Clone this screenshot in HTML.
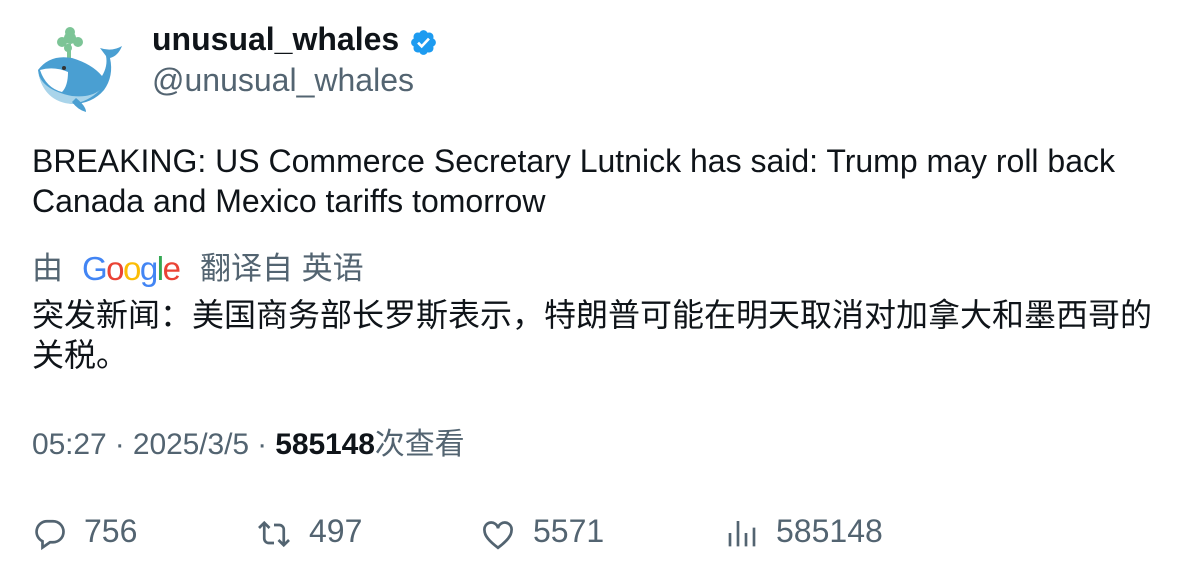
<!DOCTYPE html>
<html><head><meta charset="utf-8"><style>
body{margin:0;width:1196px;height:578px;background:#fff;font-family:"Liberation Sans","Noto Sans CJK SC",sans-serif;color:#0f1419;position:relative;overflow:hidden}
.a{position:absolute;white-space:nowrap}
.g{color:#536471}
</style></head><body>
<svg class="a" style="left:32px;top:26px" width="96" height="86" viewBox="0 0 96 86">
<g fill="#7cc496"><circle cx="38" cy="12" r="6"/><circle cx="30" cy="16" r="5"/><circle cx="46" cy="16" r="5"/><circle cx="38" cy="6" r="5"/><circle cx="36" cy="22" r="4"/><rect x="35" y="18" width="4" height="14"/></g>
<path d="M6 44 Q18 28 40 32 Q60 38 70 50 Q76 40 74 30 L68 22 Q80 26 90 20 Q86 30 78 32 Q82 50 72 64 Q60 78 40 78 Q10 74 6 44Z" fill="#4a9fd2"/>
<path d="M6 46 Q10 64 40 70 Q58 72 68 64 Q56 76 40 78 Q12 76 6 46Z" fill="#a9d4ea"/>
<path d="M8 44 Q22 40 36 46 Q36 60 30 66 Q14 62 8 44Z" fill="#fff"/>
<path d="M44 72 Q54 80 54 86 Q46 84 40 76Z" fill="#4a9fd2"/>
<circle cx="32" cy="42" r="2" fill="#333"/>
</svg>
<div class="a" style="left:152px;top:21px;font-size:32px;font-weight:bold">unusual_whales</div>
<svg class="a" style="left:409px;top:28px" width="29" height="29" viewBox="0 0 24 24"><path fill="#1d9bf0" d="M22.25 12c0-1.43-.88-2.670-2.19-3.340.46-1.390.2-2.900-.81-3.910s-2.520-1.270-3.910-.81c-.66-1.310-1.910-2.190-3.340-2.190s-2.670.88-3.330 2.190c-1.400-.46-2.910-.2-3.920.81s-1.260 2.520-.8 3.910C2.630 9.330 1.750 10.570 1.750 12s.88 2.670 2.190 3.340c-.46 1.390-.2 2.900.8 3.910s2.520 1.260 3.910.81c.67 1.310 1.910 2.190 3.340 2.190s2.680-.88 3.340-2.190c1.390.45 2.900.2 3.910-.81s1.270-2.520.81-3.910c1.310-.67 2.190-1.910 2.190-3.340z"/><path d="M7.5 12.2l3 3 6-6.4" stroke="#fff" stroke-width="2.2" fill="none"/></svg>
<div class="a g" style="left:152px;top:62px;font-size:32px">@unusual_whales</div>
<div class="a" style="left:32px;top:141px;font-size:32px;line-height:40px">BREAKING: US Commerce Secretary Lutnick has said: Trump may roll back<br>Canada and Mexico tariffs tomorrow</div>
<div class="a g" style="left:32px;top:243px;font-size:31px">由</div>
<div class="a" style="left:82px;top:250px;font-size:33px;letter-spacing:-1.5px"><span style="color:#4285f4">G</span><span style="color:#ea4335">o</span><span style="color:#fbbc05">o</span><span style="color:#4285f4">g</span><span style="color:#34a853">l</span><span style="color:#ea4335">e</span></div>
<div class="a g" style="left:200px;top:243px;font-size:31px">翻译自 英语</div>
<div class="a" style="left:32px;top:295px;font-size:32px;line-height:40px">突发新闻：美国商务部长罗斯表示，特朗普可能在明天取消对加拿大和墨西哥的<br>关税。</div>
<div class="a g" style="left:32px;top:419px;font-size:30px;letter-spacing:-0.1px">05:27 · 2025/3/5 · <b style="color:#0f1419">585148</b>次查看</div>
<svg class="a" style="left:32px;top:516px" width="36" height="36" viewBox="0 0 24 24" fill="none" stroke="#536471" stroke-width="1.8"><path d="M10 3.5h4a7 7 0 010 14h-2l-5 3.5v-4.2A7 7 0 0110 3.5z"/></svg>
<div class="a g" style="left:84px;top:513px;font-size:32px">756</div>
<svg class="a" style="left:256px;top:516px" width="36" height="36" viewBox="0 0 24 24" fill="none" stroke="#536471" stroke-width="1.8"><path d="M2 8l3.5-3.5L9 8M5.5 5v10a3 3 0 003 3H12M22 16l-3.5 3.5L15 16M18.5 19V9a3 3 0 00-3-3H12"/></svg>
<div class="a g" style="left:309px;top:513px;font-size:32px">497</div>
<svg class="a" style="left:480px;top:517px" width="36" height="36" viewBox="0 0 24 24" fill="none" stroke="#536471" stroke-width="1.8"><path d="M12 20.5C6 16 3 12.5 3 9a4.5 4.5 0 019-1.5A4.5 4.5 0 0121 9c0 3.5-3 7-9 11.5z"/></svg>
<div class="a g" style="left:533px;top:513px;font-size:32px">5571</div>
<svg class="a" style="left:726px;top:516px" width="32" height="34" viewBox="0 0 24 24" fill="none" stroke="#536471" stroke-width="2"><path d="M3 22V12M9 22V3M15 22V12M21 22V8"/></svg>
<div class="a g" style="left:776px;top:513px;font-size:32px">585148</div>
</body></html>
